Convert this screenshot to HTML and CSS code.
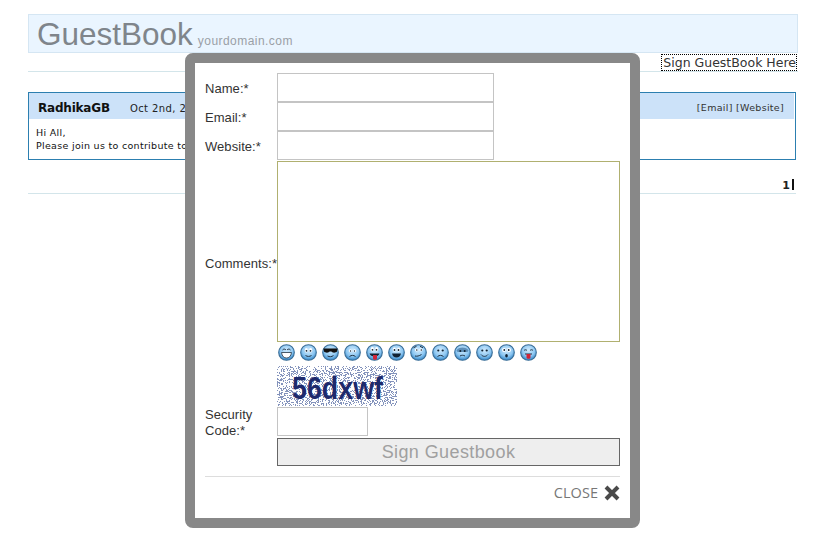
FILE: index.html
```html
<!DOCTYPE html>
<html lang="en">
<head>
    <meta charset="UTF-8">
    <title>GuestBook</title>
    <link rel="stylesheet" href="styles.css">
</head>
<body>
    <svg class="defs" width="0" height="0">
        <defs>
            <radialGradient id="face" cx="50%" cy="35%" r="65%">
                <stop offset="0" stop-color="#cfeafd"/>
                <stop offset="0.6" stop-color="#8fc8f2"/>
                <stop offset="1" stop-color="#2f84c8"/>
            </radialGradient>
            <filter id="noise" x="0" y="0" width="100%" height="100%">
                <feTurbulence type="fractalNoise" baseFrequency="0.75 0.95" numOctaves="2" seed="7"/>
                <feColorMatrix type="matrix" values="0 0 0 0 0.23  0 0 0 0 0.29  0 0 0 0 0.5  1.6 1.6 0 0 -1.2"/>
                <feComponentTransfer>
                    <feFuncA type="discrete" tableValues="0 1"/>
                </feComponentTransfer>
            </filter>
        </defs>
    </svg>

    <div class="wrap">
        <div class="head">
            <span class="logo">GuestBook</span>
            <span class="domain">yourdomain.com</span>
        </div>
        <div class="signbar">
            <a class="signlink" href="#">Sign GuestBook Here</a>
        </div>

        <div class="entry">
            <div class="entry-head">
                <div>
                    <span class="entry-name">RadhikaGB</span>
                    <span class="entry-date">Oct 2nd, 2011</span>
                </div>
                <div class="entry-links">[Email] [Website]</div>
            </div>
            <div class="entry-body">
                Hi All,<br>
                Please join us to contribute to the
            </div>
        </div>

        <div class="pager"><b>1</b><span class="pager-bar"></span></div>
    </div>

    <div class="modal">
        <form class="gform">
            <label>Name:*</label>
            <input class="field" type="text">
            <label>Email:*</label>
            <input class="field" type="text">
            <label>Website:*</label>
            <input class="field" type="text">
            <label class="comlabel">Comments:*</label>
            <div>
                <textarea class="comments"></textarea>
                <div class="smileys">
                    <svg viewBox="0 0 17 17"><circle cx="8.5" cy="8.5" r="7.8" fill="url(#face)" stroke="#3a6d96" stroke-width="1.1"/><path d="M3.500 8.500h10c-.5 3.800-2.500 5.500-5 5.500s-4.500-1.700-5-5.500z" fill="#fff" stroke="#234" stroke-width=".8"/><path d="M4.500 6c1-1.200 2.500-1.200 3.500 0M9 6c1-1.200 2.500-1.200 3.500 0" stroke="#234" fill="none"/></svg>
                    <svg viewBox="0 0 17 17"><circle cx="8.5" cy="8.5" r="7.8" fill="url(#face)" stroke="#3a6d96" stroke-width="1.1"/><ellipse cx="6.300" cy="6.300" rx="1.500" ry="2.200" fill="#fff"/><ellipse cx="10.700" cy="6.300" rx="1.500" ry="2.200" fill="#fff"/><circle cx="6.500" cy="6.800" r=".9" fill="#123"/><circle cx="10.500" cy="6.800" r=".9" fill="#123"/><path d="M5.500 11.500c2 1.200 4 1.200 6 0" stroke="#234" fill="none"/></svg>
                    <svg viewBox="0 0 17 17"><circle cx="8.5" cy="8.5" r="7.8" fill="url(#face)" stroke="#3a6d96" stroke-width="1.1"/><path d="M1.500 4.500h14l-.5 3c-1 1.500-5 1.500-5.500 0h-2c-.5 1.500-4.500 1.500-5.500 0z" fill="#111"/><path d="M5.500 12c2 1 4 1 6-.5" stroke="#234" fill="none"/></svg>
                    <svg viewBox="0 0 17 17"><circle cx="8.5" cy="8.5" r="7.8" fill="url(#face)" stroke="#3a6d96" stroke-width="1.1"/><circle cx="6.300" cy="6.800" r="1.500" fill="#fff"/><circle cx="10.700" cy="6.800" r="1.500" fill="#fff"/><circle cx="6.500" cy="7" r=".7" fill="#123"/><circle cx="10.500" cy="7" r=".7" fill="#123"/><path d="M5.500 12.500c2-1.500 4-1.500 6 0" stroke="#234" fill="none"/></svg>
                    <svg viewBox="0 0 17 17"><circle cx="8.5" cy="8.5" r="7.8" fill="url(#face)" stroke="#3a6d96" stroke-width="1.1"/><ellipse cx="6.300" cy="5.300" rx="1.600" ry="2.200" fill="#fff"/><ellipse cx="10.700" cy="5.300" rx="1.600" ry="2.200" fill="#fff"/><circle cx="6.500" cy="5.800" r=".9" fill="#123"/><circle cx="10.500" cy="5.800" r=".9" fill="#123"/><path d="M3.500 9.500h10c-.5 2-2.500 3-5 3s-4.500-1-5-3z" fill="#123"/><path d="M7 11h4v3.500c0 1.800-4 1.800-4 0z" fill="#d02438"/></svg>
                    <svg viewBox="0 0 17 17"><circle cx="8.5" cy="8.5" r="7.8" fill="url(#face)" stroke="#3a6d96" stroke-width="1.1"/><ellipse cx="6.300" cy="5.600" rx="1.500" ry="2.200" fill="#fff"/><ellipse cx="10.700" cy="5.600" rx="1.500" ry="2.200" fill="#fff"/><circle cx="6.500" cy="6" r=".9" fill="#123"/><circle cx="10.500" cy="6" r=".9" fill="#123"/><path d="M4 9.500h9c-.5 2.800-2 4-4.500 4S4.500 12.300 4 9.500z" fill="#123"/></svg>
                    <svg viewBox="0 0 17 17"><circle cx="8.5" cy="8.5" r="7.8" fill="url(#face)" stroke="#3a6d96" stroke-width="1.1"/><path d="M3.500 3.800l3-1.500M10 2.300l3 1.500" stroke="#234" fill="none"/><circle cx="6.500" cy="5.800" r="1.600" fill="#fff"/><circle cx="11" cy="5.800" r="1.600" fill="#fff"/><circle cx="6.800" cy="6" r=".8" fill="#123"/><circle cx="11.300" cy="6" r=".8" fill="#123"/><path d="M5 12c2 .5 4 0 6.500-1.500" stroke="#234" fill="none"/></svg>
                    <svg viewBox="0 0 17 17"><circle cx="8.5" cy="8.5" r="7.8" fill="url(#face)" stroke="#3a6d96" stroke-width="1.1"/><circle cx="6.300" cy="6.500" r="1.100" fill="#123"/><circle cx="10.700" cy="6.500" r="1.100" fill="#123"/><path d="M5.500 12.500c2-1.500 4-1.500 6 0" stroke="#234" fill="none"/></svg>
                    <svg viewBox="0 0 17 17"><circle cx="8.5" cy="8.5" r="7.8" fill="url(#face)" stroke="#3a6d96" stroke-width="1.1"/><path d="M2.500 6.500c1.500-4 10.500-4 12 0l-1 1.500h-10z" fill="#5d8fb8"/><circle cx="6.300" cy="7" r="1" fill="#123"/><circle cx="10.700" cy="7" r="1" fill="#123"/><path d="M6 12c1.500-1 3.500-1 5 0" stroke="#234" fill="none"/></svg>
                    <svg viewBox="0 0 17 17"><circle cx="8.5" cy="8.5" r="7.8" fill="url(#face)" stroke="#3a6d96" stroke-width="1.1"/><circle cx="6.300" cy="6.500" r="1.100" fill="#123"/><circle cx="10.700" cy="6.500" r="1.100" fill="#123"/><path d="M5 10.500c2 2.500 5 2.500 7 0" stroke="#234" fill="none"/></svg>
                    <svg viewBox="0 0 17 17"><circle cx="8.5" cy="8.5" r="7.8" fill="url(#face)" stroke="#3a6d96" stroke-width="1.1"/><circle cx="6" cy="6" r="2" fill="#fff"/><circle cx="11" cy="6" r="2" fill="#fff"/><circle cx="6.300" cy="6" r=".9" fill="#123"/><circle cx="10.700" cy="6" r=".9" fill="#123"/><ellipse cx="8.500" cy="11.800" rx="1.300" ry="1.800" fill="#123"/></svg>
                    <svg viewBox="0 0 17 17"><circle cx="8.5" cy="8.5" r="7.8" fill="url(#face)" stroke="#3a6d96" stroke-width="1.1"/><path d="M4 6.500c1-1 2-1 3 0M10 6.500c1-1 2-1 3 0" stroke="#234" fill="none"/><path d="M5 10h7" stroke="#234"/><path d="M6.500 10h4v3.500c0 1.800-4 1.800-4 0z" fill="#d02438"/></svg>
                </div>
            </div>

            <label class="seclabel">Security Code:*</label>
            <div>
                <svg class="captcha" viewBox="0 0 120 40">
                    <rect width="120" height="40" fill="#fff"/>
                    <rect width="120" height="40" filter="url(#noise)"/>
                    <text class="captcha-text" x="15" y="33" textLength="91" lengthAdjust="spacingAndGlyphs">56dxwf</text>
                </svg>
                <input class="field seccode" type="text">
            </div>

            <button class="submit" type="button" disabled>Sign Guestbook</button>
        </form>
        <div class="modal-foot">
            <a class="close" href="#">CLOSE
                <svg class="close-x" viewBox="0 0 16 16"><path d="M2 2l12 12M14 2L2 14" stroke="#4a4a4a" stroke-width="4" fill="none"/></svg>
            </a>
        </div>
    </div>
</body>
</html>
```

FILE: styles.css
```css
html, body {
    margin: 0;
    padding: 0;
    background-color: #fff;
    height: 100%;
    overflow: hidden;
}

.defs {
    position: absolute;
}

.wrap {
    width: 770px;
    margin: 14px 0 0 28px;
    font-family: "DejaVu Sans", Verdana, sans-serif;
}

.head {
    box-sizing: border-box;
    height: 39px;
    background-color: #eaf5ff;
    border: 1px solid #d5e6f3;
    padding-left: 8px;
    display: flex;
    align-items: baseline;
    gap: 5px;
    font-family: "Liberation Sans", Arial, sans-serif;
}

.logo {
    font-size: 31.5px;
    line-height: 38px;
    color: #7f858b;
}

.domain {
    font-size: 12px;
    color: #9aa0a6;
    letter-spacing: 0.45px;
}

.signbar {
    box-sizing: border-box;
    height: 19px;
    padding-top: 1px;
    border-bottom: 1px solid #d3e5ea;
    display: flex;
    justify-content: flex-end;
    align-items: flex-start;
}

.signlink {
    border: 1px dotted #000;
    padding: 1px 0 0 1px;
    margin-right: 1px;
    font-size: 12.5px;
    line-height: 14px;
    color: #333;
    text-decoration: none;
}

.entry {
    box-sizing: border-box;
    width: 768px;
    height: 68px;
    margin-top: 20px;
    border: 1px solid #2c7fb0;
}

.entry-head {
    height: 26px;
    margin-right: 1px;
    background-color: #cce2f9;
    display: flex;
    justify-content: space-between;
    align-items: center;
    padding: 0 10px 0 9px;
}

.entry-name {
    font-size: 12px;
    font-weight: bold;
    letter-spacing: -0.2px;
    color: #111;
}

.entry-date {
    margin-left: 15px;
    font-size: 10px;
    letter-spacing: 0.4px;
    color: #222;
}

.entry-links {
    padding-top: 2px;
    font-size: 9.5px;
    letter-spacing: 0.3px;
    color: #333;
}

.entry-body {
    padding: 7px 7px;
    font-size: 9.5px;
    letter-spacing: 0.3px;
    line-height: 13px;
    color: #111;
}

.pager {
    box-sizing: border-box;
    width: 768px;
    height: 34px;
    padding: 19px 2px 0 0;
    border-bottom: 1px solid #d3e5ea;
    display: flex;
    justify-content: flex-end;
    font-size: 11px;
    color: #222;
}

.pager-bar {
    width: 2px;
    height: 11px;
    margin-left: 2px;
    background-color: #111;
}

/* popup over the page */
.modal {
    position: absolute;
    left: 185px;
    top: 53px;
    box-sizing: border-box;
    width: 455px;
    height: 475px;
    padding: 10px 10px 0;
    background-color: #fff;
    border: 10px solid #888;
    border-radius: 8px;
    font-family: "Liberation Sans", Arial, sans-serif;
    font-size: 13px;
    letter-spacing: 0.05px;
    color: #333;
}

.gform {
    display: grid;
    grid-template-columns: 72px 343px;
}

.gform label {
    align-self: center;
    padding-top: 2px;
    white-space: nowrap;
}

.gform .comlabel {
    padding-top: 0;
}

.field {
    box-sizing: border-box;
    display: block;
    width: 217px;
    height: 29px;
    margin: 0;
    padding: 0;
    background-color: #fff;
    border: 1px solid #c4c4c4;
}

.comments {
    box-sizing: border-box;
    display: block;
    width: 343px;
    height: 181px;
    margin: 1px 0 0;
    padding: 0;
    resize: none;
    background-color: #fff;
    border: 1px solid #b0b070;
}

.smileys {
    display: flex;
    gap: 5px;
    margin: 2px 0 5px 1px;
}

.smileys svg {
    width: 17px;
    height: 17px;
}

.captcha {
    display: block;
    width: 120px;
    height: 40px;
}

.captcha-text {
    font-family: "Liberation Sans", sans-serif;
    font-size: 31px;
    font-weight: bold;
    fill: #1e2a6c;
}

.gform .seclabel {
    align-self: end;
    width: 60px;
    padding-top: 0;
    white-space: normal;
    line-height: 16px;
    margin-bottom: -3px;
}

.seccode {
    width: 91px;
    height: 29px;
    margin-top: 1px;
}

.submit {
    grid-column: 2;
    box-sizing: border-box;
    width: 343px;
    height: 28px;
    margin-top: 2px;
    padding: 0;
    background-color: #eee;
    border: 1px solid #666;
    border-radius: 0;
    font-family: "Liberation Sans", Arial, sans-serif;
    font-size: 18px;
    letter-spacing: 0.4px;
    color: #a0a0a0;
}

.modal-foot {
    margin-top: 10px;
    padding-top: 6px;
    border-top: 1px solid #ddd;
    text-align: right;
}

.close {
    display: inline-flex;
    align-items: center;
    gap: 6px;
    font-family: "Open Sans", sans-serif;
    font-size: 14.5px;
    color: #777;
    text-decoration: none;
}

.close-x {
    width: 16px;
    height: 16px;
}
```
